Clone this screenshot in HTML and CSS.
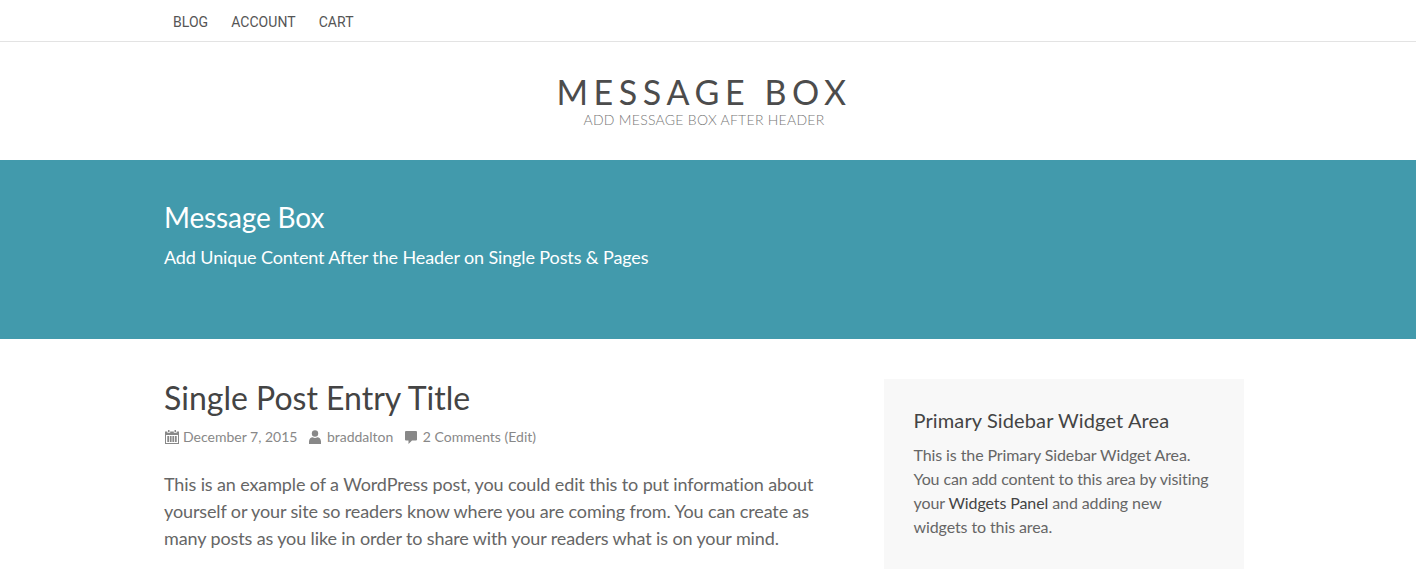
FILE: index.html
```html
<!DOCTYPE html>
<html lang="en">
<head>
    <meta charset="UTF-8">
    <meta name="viewport" content="width=device-width, initial-scale=1.0">
    <title>Single Post Entry Title - Message Box</title>
    <link rel="stylesheet" href="styles.css">
</head>
<body>
    <nav class="top-nav">
        <ul class="nav-list">
            <li><a href="#">Blog</a></li>
            <li><a href="#">Account</a></li>
            <li><a href="#">Cart</a></li>
        </ul>
    </nav>

    <header class="site-header">
        <h1 class="site-title">Message Box</h1>
        <p class="site-desc">Add Message Box After Header</p>
    </header>

    <section class="message-box">
        <div class="wrap">
            <h2>Message Box</h2>
            <p>Add Unique Content After the Header on Single Posts &amp; Pages</p>
        </div>
    </section>

    <div class="wrap content-wrap">
        <main class="entry">
            <h1 class="entry-title">Single Post Entry Title</h1>
            <p class="entry-meta">
                <span class="meta-item">
                    <svg class="meta-icon" width="14" height="14" viewBox="0 0 14 14"><path d="M3 0h1.500v2H3zM9.500 0H11v2H9.500zM0 1.500h2.300v1.300h2.900V1.500h3.600v1.300h2.900V1.500H14V14H0zM1 5v8h12V5zM2.300 6h1.900v6H2.300zM5 6h1.600v6H5zM7.400 6H9v6H7.400zM9.800 6h1.900v6H9.800z" fill-rule="evenodd"/></svg>
                    December 7, 2015
                </span>
                <span class="meta-item">
                    <svg class="meta-icon" width="14" height="14" viewBox="0 0 14 14"><circle cx="6" cy="3.500" r="3.200"/><path d="M0 14v-2.500C0 8.800 2 7.300 3.700 7.300c.7.500 1.500.8 2.300.8s1.600-.3 2.300-.8c1.700 0 3.700 1.500 3.700 4.200V14z"/></svg>
                    braddalton
                </span>
                <span class="meta-item">
                    <svg class="meta-icon" width="14" height="14" viewBox="0 0 14 14"><path d="M1 1h10a1 1 0 0 1 1 1v7.500a1 1 0 0 1-1 1H7L3.500 14v-3.500H1a1 1 0 0 1-1-1V2a1 1 0 0 1 1-1z"/></svg>
                    2 Comments (Edit)
                </span>
            </p>
            <p class="entry-text">This is an example of a WordPress post, you could edit this to put information about yourself or your site so readers know where you are coming from. You can create as many posts as you like in order to share with your readers what is on your mind.</p>
        </main>

        <aside class="sidebar">
            <h4>Primary Sidebar Widget Area</h4>
            <p>This is the Primary Sidebar Widget Area. You can add content to this area by visiting your <a href="#">Widgets Panel</a> and adding new widgets to this area.</p>
        </aside>
    </div>
</body>
</html>
```

FILE: styles.css
```css
body {
    background: #fff;
    color: #666;
    font-family: 'Lato', sans-serif;
    margin: 0;
    height: 579px;
    overflow: hidden;
}

a {
    color: inherit;
    text-decoration: none;
}

.wrap {
    width: 1080px;
    margin-left: 164px;
}

.top-nav {
    height: 41px;
    border-bottom: 1px solid #e3e3e3;
}

.nav-list {
    display: flex;
    gap: 23px;
    margin: 0 0 0 173px;
    padding: 0;
    list-style: none;
    font-family: 'Roboto', sans-serif;
    font-size: 14px;
    line-height: 44px;
    letter-spacing: 0.05px;
    color: #555;
    text-transform: uppercase;
}

.site-header {
    width: 1408px;
    height: 118px;
    text-align: center;
}

.site-title {
    margin: 0;
    padding-top: 29px;
    font-size: 34px;
    font-weight: 400;
    line-height: 41px;
    letter-spacing: 5.6px;
    color: #4c4c4c;
    text-transform: uppercase;
}

.site-desc {
    margin: 0;
    font-size: 14px;
    font-weight: 300;
    line-height: 16px;
    letter-spacing: 0.27px;
    color: #777;
    text-transform: uppercase;
}

.message-box {
    height: 179px;
    background: #429aac;
    color: #fff;
}

.message-box h2 {
    margin: 0;
    padding-top: 40px;
    font-size: 28px;
    font-weight: 400;
    line-height: 34px;
    letter-spacing: -0.15px;
}

.message-box p {
    margin: 8px 0 0;
    font-size: 18px;
    line-height: 30px;
    letter-spacing: -0.12px;
}

.content-wrap {
    display: flex;
    justify-content: space-between;
    padding-top: 39px;
}

.entry {
    width: 660px;
}

.entry-title {
    margin: 0;
    font-size: 32px;
    font-weight: 400;
    line-height: 40px;
    color: #444;
}

.entry-meta {
    display: flex;
    gap: 11.5px;
    margin: 9px 0 0;
    padding-left: 1px;
    font-size: 14px;
    line-height: 20px;
    color: #888;
}

.meta-item {
    display: flex;
    align-items: center;
    gap: 4px;
}

.meta-icon {
    fill: #888;
    flex: none;
}

.entry-text {
    margin: 24px 0 0;
    font-size: 18px;
    line-height: 27px;
    letter-spacing: -0.12px;
}

.sidebar {
    box-sizing: border-box;
    width: 360px;
    height: 190px;
    margin-top: 1px;
    padding: 29px 30px 0 29.5px;
    background: #f8f8f8;
    font-size: 16px;
    line-height: 24px;
    letter-spacing: -0.1px;
}

.sidebar h4 {
    margin: 0 0 11px;
    font-size: 20px;
    font-weight: 400;
    line-height: 24px;
    letter-spacing: 0.12px;
    color: #444;
}

.sidebar p {
    margin: 0;
}

.sidebar a {
    color: #444;
}
```
